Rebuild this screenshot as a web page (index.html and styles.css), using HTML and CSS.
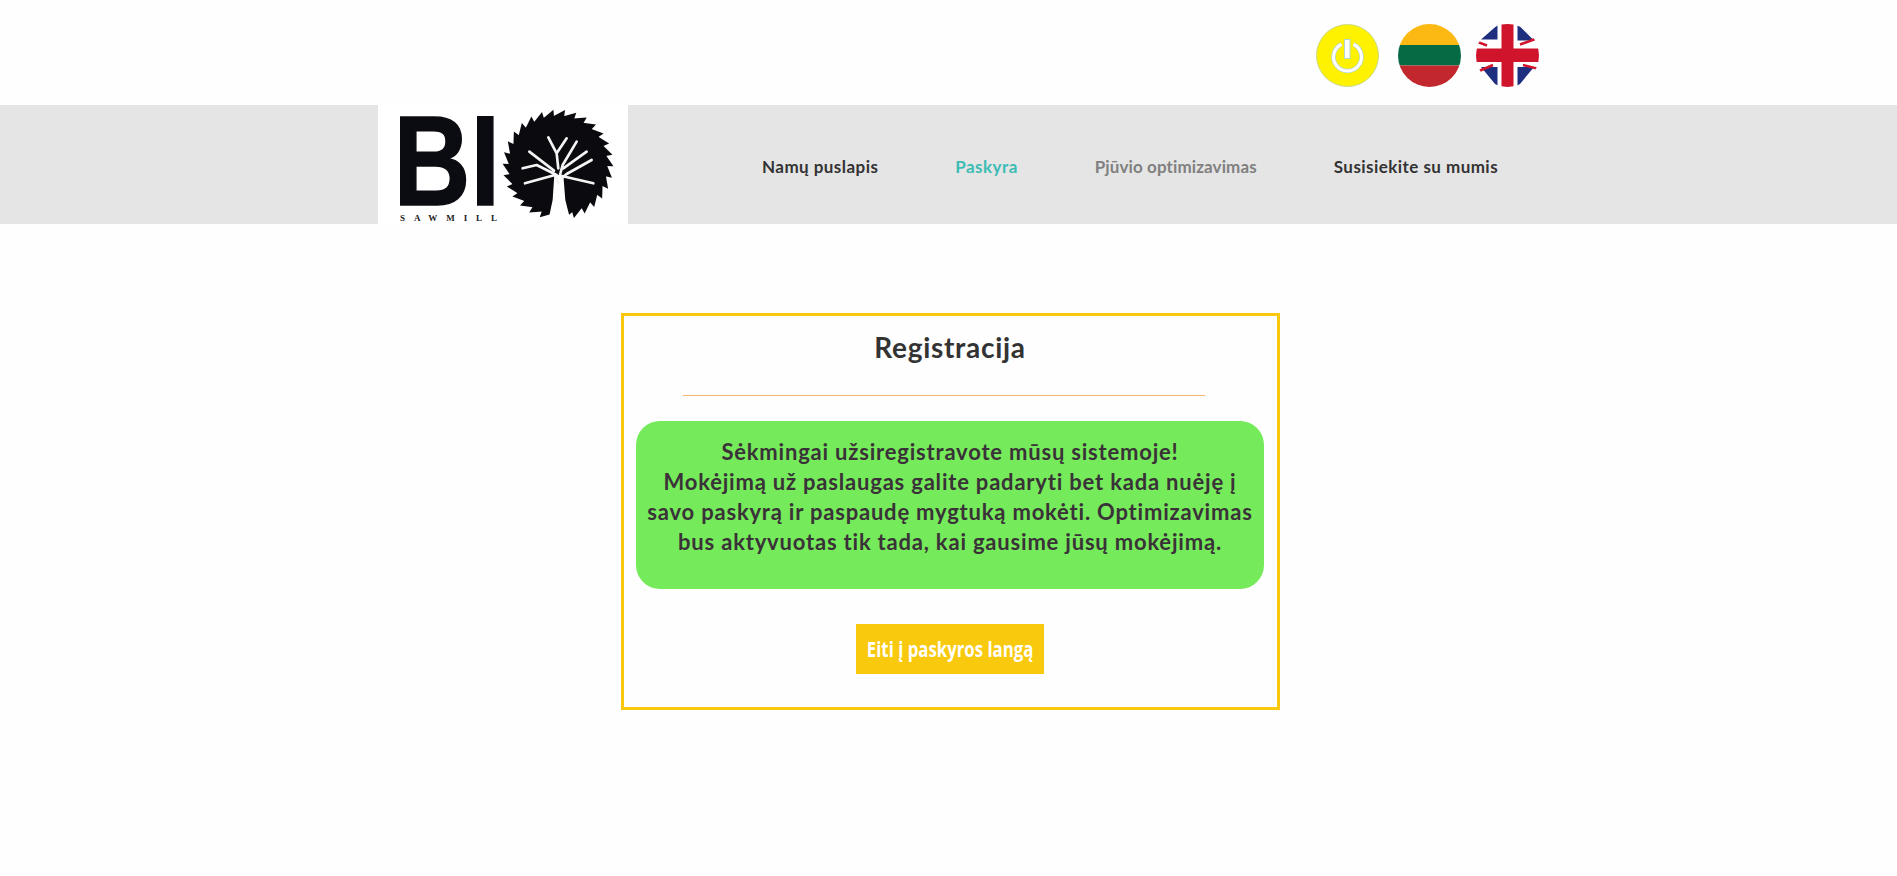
FILE: index.html
```html
<!DOCTYPE html>
<html lang="lt">
<head>
<meta charset="utf-8">
<title>Registracija</title>
<link rel="stylesheet" href="styles.css">
</head>
<body>
<div class="topbar">
  <a class="round power"><svg viewBox="0 0 63 63" width="63" height="63">
    <circle cx="31.5" cy="31.5" r="31" fill="#fff200" stroke="#c9d98a" stroke-width="1"/>
    <path d="M25.500 20.300 A14 14 0 1 0 37.500 20.300" fill="none" stroke="#b5d6cf" stroke-width="4.500"/>
    <path d="M25.500 20.300 A14 14 0 1 0 37.500 20.300" fill="none" stroke="#fff" stroke-width="3"/>
    <rect x="28.500" y="15.500" width="5.500" height="19" fill="#fff" stroke="#b5d6cf" stroke-width="1"/>
  </svg></a>
  <a class="round lt"><svg viewBox="0 0 63 63" width="63" height="63">
    <defs><clipPath id="c1"><circle cx="31.5" cy="31.5" r="31.5"/></clipPath></defs>
    <g clip-path="url(#c1)">
      <rect width="63" height="21" fill="#fdb913"/>
      <rect y="21" width="63" height="20.500" fill="#066a45"/>
      <rect y="41.500" width="63" height="21.500" fill="#c1272d"/>
    </g>
  </svg></a>
  <a class="round uk"><svg viewBox="0 0 63 63" width="63" height="63">
    <defs><clipPath id="c2"><circle cx="31.5" cy="31.5" r="31.5"/></clipPath></defs>
    <g clip-path="url(#c2)">
      <rect width="63" height="63" fill="#fff"/>
      <path d="M5 15.500 L21.500 1 L21.500 15.500 Z M41.500 0 L41.500 16.500 L58 16.500 Z M5 43 L21.500 43 L21.500 63 Z M41.500 43 L58 43 L41.500 63 Z" fill="#1f2f80"/>
      <path d="M0 17.500 L11 21.500 M44 20.500 L62 14 M2 47.500 L17 41 M47 41 L63 45" stroke="#cf142b" stroke-width="2.500"/>
      <rect x="25.500" width="12" height="63" fill="#cf142b"/>
      <rect y="24.500" width="63" height="13.500" fill="#cf142b"/>
    </g>
  </svg></a>
</div>

<header class="band">
  <a class="logo"><svg viewBox="0 0 250 119" width="250" height="119">
    <rect width="250" height="119" fill="#fff"/>
    <text class="logo-bi" x="15.500" y="100" textLength="106.500" lengthAdjust="spacingAndGlyphs">BI</text>
    <text class="logo-saw" x="22" y="115.500" textLength="97">SAWMILL</text>
    <defs><path id="tooth" d="M172 13 L187 5 L186 13 Z" fill="#0b0b0f"/></defs>
    <circle cx="180" cy="60" r="49" fill="#0b0b0f"/>
    <use href="#tooth"/>
    <use href="#tooth" transform="rotate(12 180 60)"/>
    <use href="#tooth" transform="rotate(24 180 60)"/>
    <use href="#tooth" transform="rotate(36 180 60)"/>
    <use href="#tooth" transform="rotate(48 180 60)"/>
    <use href="#tooth" transform="rotate(60 180 60)"/>
    <use href="#tooth" transform="rotate(72 180 60)"/>
    <use href="#tooth" transform="rotate(84 180 60)"/>
    <use href="#tooth" transform="rotate(96 180 60)"/>
    <use href="#tooth" transform="rotate(108 180 60)"/>
    <use href="#tooth" transform="rotate(120 180 60)"/>
    <use href="#tooth" transform="rotate(132 180 60)"/>
    <use href="#tooth" transform="rotate(144 180 60)"/>
    <use href="#tooth" transform="rotate(156 180 60)"/>
    <use href="#tooth" transform="rotate(168 180 60)"/>
    <use href="#tooth" transform="rotate(180 180 60)"/>
    <use href="#tooth" transform="rotate(192 180 60)"/>
    <use href="#tooth" transform="rotate(204 180 60)"/>
    <use href="#tooth" transform="rotate(216 180 60)"/>
    <use href="#tooth" transform="rotate(228 180 60)"/>
    <use href="#tooth" transform="rotate(240 180 60)"/>
    <use href="#tooth" transform="rotate(252 180 60)"/>
    <use href="#tooth" transform="rotate(264 180 60)"/>
    <use href="#tooth" transform="rotate(276 180 60)"/>
    <use href="#tooth" transform="rotate(288 180 60)"/>
    <use href="#tooth" transform="rotate(300 180 60)"/>
    <use href="#tooth" transform="rotate(312 180 60)"/>
    <use href="#tooth" transform="rotate(324 180 60)"/>
    <use href="#tooth" transform="rotate(336 180 60)"/>
    <use href="#tooth" transform="rotate(348 180 60)"/>
    <g transform="translate(-8 -5) scale(.3333)">
      <path d="M553 225 L580 225 L586 300 L605 375 L532 375 L548 300 Z" fill="#fff"/>
      <path d="M565 250 L555 225 L465 250 M560 225 L500 195 L458 205 M552 212 L478 155 M565 205 L560 160 L535 112 M560 160 L590 115 M570 225 L578 195 L620 125 M580 205 L650 155 M575 235 L590 222 L665 180 M575 228 L670 250" fill="none" stroke="#f4f4f4" stroke-width="8" stroke-linecap="round" stroke-linejoin="round"/>
    </g>
  </svg></a>
  <nav class="menu">
    <a class="item">Namų puslapis</a>
    <a class="item active">Paskyra</a>
    <a class="item muted">Pjūvio optimizavimas</a>
    <a class="item">Susisiekite su mumis</a>
  </nav>
</header>

<main class="main">
  <section class="card">
    <h1 class="title">Registracija</h1>
    <hr class="rule">
    <div class="notice">Sėkmingai užsiregistravote mūsų sistemoje!<br>Mokėjimą už paslaugas galite padaryti bet kada nuėję į<br>savo paskyrą ir paspaudę mygtuką mokėti. Optimizavimas<br>bus aktyvuotas tik tada, kai gausime jūsų mokėjimą.</div>
    <div class="actions"><a class="btn"><span class="btn-text">Eiti į paskyros langą</span></a></div>
  </section>
</main>
</body>
</html>
```
FILE: styles.css
```css
* { box-sizing: border-box; }
html, body { margin: 0; padding: 0; }
body {
  background: #fefefe;
  font-family: "Lato", "Liberation Sans", sans-serif;
  color: #333;
  height: 876px;
  overflow: hidden;
}
.topbar {
  height: 105px;
  display: flex;
  justify-content: flex-end;
  align-items: flex-start;
  padding: 24px 358px 0 0;
  background: #fefefe;
}
.round { display: block; width: 63px; height: 63px; }
.round svg { display: block; }
.power { margin-right: 19px; }
.lt { margin-right: 15px; }
.band {
  height: 119px;
  background: #e5e5e5;
  display: flex;
  padding-left: 378px;
}
.logo { display: block; width: 250px; height: 119px; }
.logo svg { display: block; }
.logo-bi {
  font-family: "Liberation Sans", sans-serif;
  font-weight: 700;
  font-size: 128px;
  fill: #0b0b12;
  stroke: #0b0b12;
  stroke-width: 1.5px;
}
.logo-saw {
  font-family: "Liberation Serif", serif;
  font-size: 9px;
  font-weight: 700;
  fill: #222;
}
.menu {
  display: flex;
  align-items: center;
  gap: 77px;
  padding: 3px 0 0 134px;
}
.item {
  font-size: 17px;
  font-weight: 700;
  letter-spacing: .45px;
  color: #333;
  white-space: nowrap;
}
.active { color: #3cbcb4; }
.muted { color: #808080; letter-spacing: .1px; }
.main {
  display: flex;
  justify-content: center;
  padding: 89px 0 0 4px;
}
.card {
  width: 659px;
  height: 397px;
  border: 3px solid #f9c80e;
  background: #fefefe;
  padding: 0 13px 0 12px;
  display: flex;
  flex-direction: column;
}
.title {
  margin: 13px 0 0;
  font-size: 28px;
  line-height: 36px;
  font-weight: 700;
  letter-spacing: .7px;
  text-align: center;
  color: #333;
}
.rule {
  margin: 30px 0 0 47px;
  width: 522px;
  height: 1px;
  border: 0;
  background: #f3b46c;
}
.notice {
  margin-top: 25px;
  height: 168px;
  padding-top: 16px;
  background: #75ea5a;
  border-radius: 24px;
  text-align: center;
  font-size: 22px;
  line-height: 30px;
  font-weight: 700;
  letter-spacing: .8px;
  color: #3a3238;
  white-space: nowrap;
}
.actions {
  margin-top: 35px;
  display: flex;
  justify-content: center;
}
.btn {
  width: 188px;
  height: 50px;
  background: #f9c90e;
  display: flex;
  align-items: center;
  justify-content: center;
}
.btn-text {
  display: block;
  font-family: "Open Sans", sans-serif;
  font-weight: 700;
  font-size: 21px;
  color: #fff;
  white-space: nowrap;
  transform: scaleX(.8);
}
```
